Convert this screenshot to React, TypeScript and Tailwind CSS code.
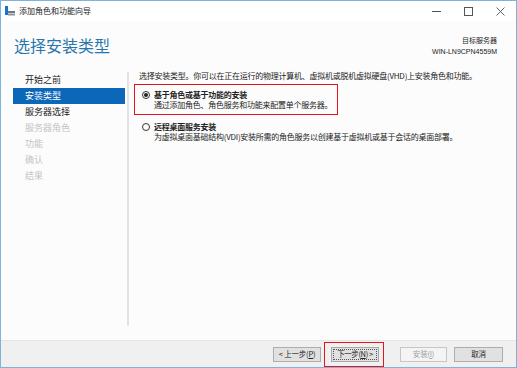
import React from "react";

const navItems = [
  { label: "开始之前", state: "done" },
  { label: "安装类型", state: "active" },
  { label: "服务器选择", state: "done" },
  { label: "服务器角色", state: "off" },
  { label: "功能", state: "off" },
  { label: "确认", state: "off" },
  { label: "结果", state: "off" },
];

const Radio: React.FC<{ checked?: boolean }> = ({ checked }) => (
  <span className="w-[8px] h-[8px] rounded-full border border-[#333] bg-white flex items-center justify-center shrink-0">
    {checked && <span className="w-[4px] h-[4px] rounded-full bg-[#222]" />}
  </span>
);

const App: React.FC = () => {
  return (
    <div className="w-[517px] h-[368px] border border-[#7db4da] bg-[#fcfcfc] flex flex-col font-['Noto_Sans_CJK_SC',sans-serif] text-[#222] overflow-hidden">
      {/* Title bar */}
      <div className="h-[20px] bg-white flex items-center shrink-0">
        <svg width="10" height="10" viewBox="0 0 10 10" className="ml-[4px] mr-[4px]">
          <rect x="0" y="0" width="3" height="9" fill="#1a73c8" />
          <rect x="3" y="5" width="7" height="2" fill="#6b7a88" />
          <rect x="3" y="7.5" width="7" height="2" fill="#8a98a6" />
        </svg>
        <span className="text-[8px] leading-[10px] text-[#222]">添加角色和功能向导</span>
        <div className="ml-auto flex items-center h-full">
          <div className="w-[32px] h-full flex items-center justify-center">
            <svg width="9" height="9" viewBox="0 0 9 9"><line x1="0" y1="4.5" x2="9" y2="4.5" stroke="#555" strokeWidth="1" /></svg>
          </div>
          <div className="w-[32px] h-full flex items-center justify-center">
            <svg width="9" height="9" viewBox="0 0 9 9"><rect x="0.5" y="0.5" width="8" height="8" fill="none" stroke="#555" strokeWidth="1" /></svg>
          </div>
          <div className="w-[32px] h-full flex items-center justify-center">
            <svg width="9" height="9" viewBox="0 0 9 9"><path d="M0.5 0.5 L8.5 8.5 M8.5 0.5 L0.5 8.5" stroke="#555" strokeWidth="0.9" /></svg>
          </div>
        </div>
      </div>

      {/* Header */}
      <div className="h-[45px] flex justify-between shrink-0">
        <h1 className="pl-[13px] pt-[14px] text-[16px] leading-[20px] text-[#2877ab]">选择安装类型</h1>
        <div className="pr-[19px] pt-[14px] text-right text-[7px] leading-[11px] text-[#222]">
          <div>目标服务器</div>
          <div className="font-['Liberation_Sans',sans-serif]">WIN-LN9CPN4559M</div>
        </div>
      </div>

      {/* Main */}
      <div className="flex-1 flex">
        <nav className="w-[126px] pt-[6px] pl-[12px] shrink-0">
          {navItems.map((item) => (
            <div
              key={item.label}
              className={`h-[16px] w-[112px] pl-[12px] flex items-center text-[9px] ${
                item.state === "active"
                  ? "bg-[#0c67b9] text-white"
                  : item.state === "done"
                  ? "text-[#222]"
                  : "text-[#c4c4c4]"
              }`}
            >
              {item.label}
            </div>
          ))}
        </nav>
        <div className="flex flex-col">
          <div className="mt-[6px] w-[2px] h-[254px] bg-[#e3e3e3]" />
        </div>
        <div className="flex-1 pl-[5px] pt-[5px] text-[8px] leading-[10px] tracking-[-0.25px] whitespace-nowrap">
          <p className="pl-[5px]">选择安装类型。你可以在正在运行的物理计算机、虚拟机或脱机虚拟硬盘(VHD)上安装角色和功能。</p>
          <div className="mt-[3px] w-[204px] border border-[#e8121c] pl-[7px] pt-[4px] pb-[4px]">
            <div className="flex items-center gap-[4px] h-[11px]">
              <Radio checked />
              <span className="font-bold">基于角色或基于功能的安装</span>
            </div>
            <div className="pl-[12px] h-[10px]">通过添加角色、角色服务和功能来配置单个服务器。</div>
          </div>
          <div className="mt-[6px] pl-[8px]">
            <div className="flex items-center gap-[4px] h-[11px]">
              <Radio />
              <span className="font-bold">远程桌面服务安装</span>
            </div>
            <div className="pl-[12px]">为虚拟桌面基础结构(VDI)安装所需的角色服务以创建基于虚拟机或基于会话的桌面部署。</div>
          </div>
        </div>
      </div>

      {/* Footer */}
      <div className="h-[27px] bg-[#f0f0f0] border-t border-[#e6e6e6] flex items-center justify-end pr-[13px] shrink-0 text-[7.5px] tracking-[-0.2px] whitespace-nowrap">
        <button className="w-[48px] h-[15px] bg-[#e1e1e1] border border-[#adadad] flex items-center justify-center leading-none">
          &lt; 上一步(<span className="underline">P</span>)
        </button>
        <div className="ml-[3px] border border-[#e8121c] pl-[6px] pr-[4px] py-[4px]">
          <button className="w-[48px] h-[15px] bg-[#e1e1e1] border border-[#a8a8a8] flex items-center justify-center p-[1px]">
            <span className="w-full h-full border border-dotted border-[#555] flex items-center justify-center leading-none tracking-[-0.4px]">
              下一步(<span className="underline">N</span>) &gt;
            </span>
          </button>
        </div>
        <button className="ml-[16px] w-[47px] h-[15px] bg-[#f4f4f4] border border-[#c6c6c6] text-[#a0a0a0] flex items-center justify-center leading-none">
          安装(<span className="underline">I</span>)
        </button>
        <button className="ml-[7px] w-[49px] h-[15px] bg-[#e1e1e1] border border-[#adadad] flex items-center justify-center leading-none">
          取消
        </button>
      </div>
    </div>
  );
};

export default App;
